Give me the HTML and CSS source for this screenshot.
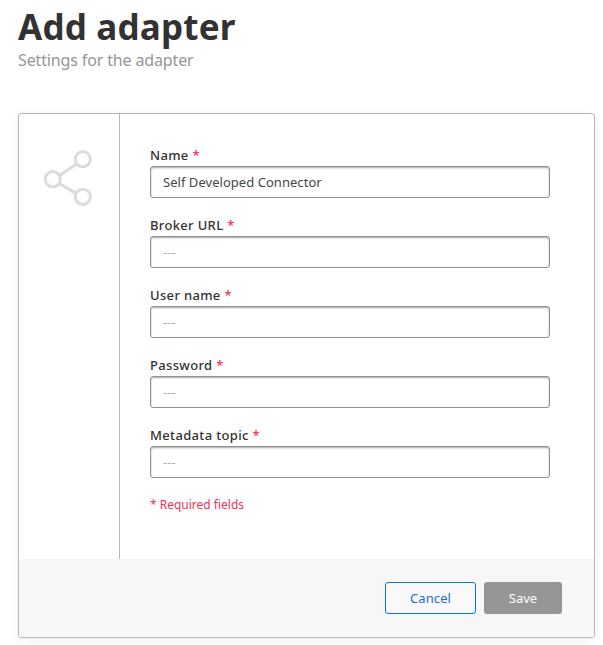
FILE: index.html
```html
<!DOCTYPE html>
<html lang="en">
<head>
<meta charset="utf-8">
<title>Add adapter</title>
<link rel="stylesheet" href="styles.css">
</head>
<body>
<header class="page-header">
  <h1 class="title">Add adapter</h1>
  <p class="subtitle">Settings for the adapter</p>
</header>
<form class="card">
  <div class="card-main">
    <div class="card-side">
      <svg class="share" width="50" height="57" viewBox="0 0 50 57" fill="none" stroke="#dcdcdc" stroke-width="3">
        <path d="M16 25.2 32.5 14M16 34.2 32.5 43.5" stroke-width="3.2"/>
        <circle cx="8.8" cy="29.2" r="7.6"/>
        <circle cx="38.8" cy="9.2" r="7.6"/>
        <circle cx="38.8" cy="46.8" r="7.6"/>
      </svg>
    </div>
    <div class="fields">
      <div class="field"><label class="label" for="name">Name <b class="star">*</b></label><input class="input" id="name" type="text" value="Self Developed Connector"></div>
      <div class="field"><label class="label" for="url">Broker URL <b class="star">*</b></label><input class="input" id="url" type="text" placeholder="---"></div>
      <div class="field"><label class="label" for="user">User name <b class="star">*</b></label><input class="input" id="user" type="text" placeholder="---"></div>
      <div class="field"><label class="label" for="pass">Password <b class="star">*</b></label><input class="input" id="pass" type="password" placeholder="---"></div>
      <div class="field"><label class="label" for="topic">Metadata topic <b class="star">*</b></label><input class="input" id="topic" type="text" placeholder="---"></div>
      <p class="required">* Required fields</p>
    </div>
  </div>
  <footer class="actions">
    <button class="btn btn-cancel" type="button">Cancel</button>
    <button class="btn btn-save" type="button">Save</button>
  </footer>
</form>
</body>
</html>
```
FILE: styles.css
```css
* { box-sizing: border-box; }
body {
  margin: 0;
  height: 645px;
  overflow: hidden;
  background: #fff;
  color: #323232;
  font-family: "Noto Sans", "Open Sans", sans-serif;
}
.page-header { height: 113px; padding: 4px 0 0 18px; }
.title { margin: 0; font-size: 35px; line-height: 46px; font-weight: 700; letter-spacing: .2px; }
.subtitle { margin: 0; font-size: 16px; line-height: 20px; letter-spacing: -.14px; color: #969696; }
.card {
  width: 577px;
  height: 525px;
  margin-left: 18px;
  display: flex;
  flex-direction: column;
  border: 1px solid #b9b9b9;
  border-radius: 3px;
  box-shadow: 0 2px 10px rgba(0, 0, 0, .07);
  overflow: hidden;
}
.card-main { flex: 1; display: flex; }
.card-side { width: 101px; border-right: 1px solid #b9b9b9; padding: 36px 0 0 25px; }
.share { display: block; }
.fields { padding: 31px 0 0 30px; }
.field { width: 400px; height: 70px; }
.label { display: block; height: 21px; font-size: 13px; line-height: 20px; font-weight: 500; letter-spacing: .34px; }
.star { color: #ff2846; font-weight: 500; }
.input {
  display: block;
  width: 400px;
  height: 32px;
  padding: 0 12px;
  border: 1px solid #919191;
  border-radius: 3px;
  box-shadow: inset 0 1px 2px rgba(0, 0, 0, .35);
  background: #fff;
  font: 13px "Noto Sans", "Open Sans", sans-serif;
  letter-spacing: .04px;
  color: #464646;
}
.input::placeholder { color: #afafaf; opacity: 1; }
.required { margin: 1px 0 0; font-size: 12px; line-height: 18px; color: #f0325a; }
.actions {
  height: 78px;
  padding: 23px 32px 0 0;
  display: flex;
  justify-content: flex-end;
  gap: 8px;
  background: #f7f7f7;
}
.btn {
  height: 32px;
  padding: 0;
  border-radius: 3px;
  font: 13px "Noto Sans", "Open Sans", sans-serif;
}
.btn-cancel { width: 91px; border: 1px solid #0a73e1; background: #f9f9f9; color: #2369dc; letter-spacing: .1px; }
.btn-save { width: 78px; border: 0; background: #969696; color: #fff; }
```
